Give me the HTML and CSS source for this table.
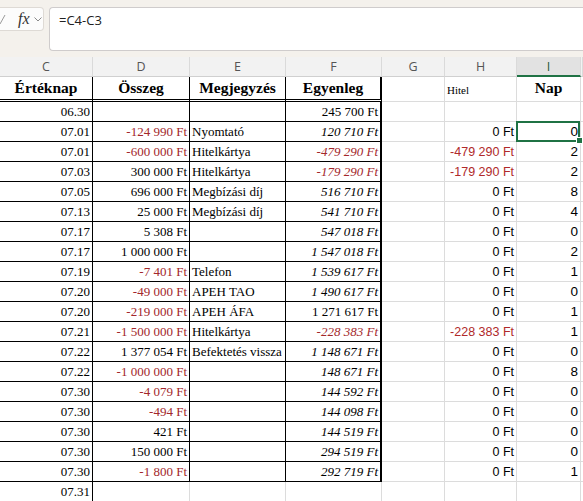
FILE: index.html
```html
<!DOCTYPE html>
<html>
<head>
<meta charset="utf-8">
<link rel="stylesheet" href="styles.css">
</head>
<body>
<div class="fbar">
  <div class="fxbox">
    <svg class="chk" width="8" height="12" viewBox="0 0 8 12"><path d="M0 11 L5 2" stroke="#9a9a9a" stroke-width="1" fill="none"/></svg>
    <span class="fx">fx</span>
    <svg class="chev" width="8" height="5" viewBox="0 0 8 5"><path d="M0.5 0.5 L4 4 L7.5 0.5" stroke="#8a8a8a" stroke-width="1" fill="none"/></svg>
  </div>
  <div class="formula">=C4-C3</div>
</div>

<div class="sheet">
  <div class="row letters">
    <div class="lc">C</div><div class="lc">D</div><div class="lc">E</div><div class="lc">F</div><div class="lc">G</div><div class="lc">H</div><div class="lc sel">I</div><div class="lc"></div>
  </div>
  <div class="row head">
    <div class="c t hd">Értéknap</div>
    <div class="c t hd">Összeg</div>
    <div class="c t hd">Megjegyzés</div>
    <div class="c t f hd">Egyenleg</div>
    <div class="c"></div>
    <div class="c hitel">Hitel</div>
    <div class="c hd">Nap</div>
    <div class="c"></div>
  </div>

  <div class="row"><div class="c t r">06.30</div><div class="c t r"></div><div class="c t"></div><div class="c t f r">245 700 Ft</div><div class="c"></div><div class="c h"></div><div class="c i"></div><div class="c"></div></div>
  <div class="row"><div class="c t r">07.01</div><div class="c t r n">-124 990 Ft</div><div class="c t">Nyomtató</div><div class="c t f r it">120 710 Ft</div><div class="c"></div><div class="c h">0 Ft</div><div class="c i active">0</div><div class="c"></div></div>
  <div class="row"><div class="c t r">07.01</div><div class="c t r n">-600 000 Ft</div><div class="c t">Hitelkártya</div><div class="c t f r it n">-479 290 Ft</div><div class="c"></div><div class="c h n">-479 290 Ft</div><div class="c i">2</div><div class="c"></div></div>
  <div class="row"><div class="c t r">07.03</div><div class="c t r">300 000 Ft</div><div class="c t">Hitelkártya</div><div class="c t f r it n">-179 290 Ft</div><div class="c"></div><div class="c h n">-179 290 Ft</div><div class="c i">2</div><div class="c"></div></div>
  <div class="row"><div class="c t r">07.05</div><div class="c t r">696 000 Ft</div><div class="c t">Megbízási díj</div><div class="c t f r it">516 710 Ft</div><div class="c"></div><div class="c h">0 Ft</div><div class="c i">8</div><div class="c"></div></div>
  <div class="row"><div class="c t r">07.13</div><div class="c t r">25 000 Ft</div><div class="c t">Megbízási díj</div><div class="c t f r it">541 710 Ft</div><div class="c"></div><div class="c h">0 Ft</div><div class="c i">4</div><div class="c"></div></div>
  <div class="row"><div class="c t r">07.17</div><div class="c t r">5 308 Ft</div><div class="c t"></div><div class="c t f r it">547 018 Ft</div><div class="c"></div><div class="c h">0 Ft</div><div class="c i">0</div><div class="c"></div></div>
  <div class="row"><div class="c t r">07.17</div><div class="c t r">1 000 000 Ft</div><div class="c t"></div><div class="c t f r it">1 547 018 Ft</div><div class="c"></div><div class="c h">0 Ft</div><div class="c i">2</div><div class="c"></div></div>
  <div class="row"><div class="c t r">07.19</div><div class="c t r n">-7 401 Ft</div><div class="c t">Telefon</div><div class="c t f r it">1 539 617 Ft</div><div class="c"></div><div class="c h">0 Ft</div><div class="c i">1</div><div class="c"></div></div>
  <div class="row"><div class="c t r">07.20</div><div class="c t r n">-49 000 Ft</div><div class="c t">APEH TAO</div><div class="c t f r it">1 490 617 Ft</div><div class="c"></div><div class="c h">0 Ft</div><div class="c i">0</div><div class="c"></div></div>
  <div class="row"><div class="c t r">07.20</div><div class="c t r n">-219 000 Ft</div><div class="c t">APEH ÁFA</div><div class="c t f r">1 271 617 Ft</div><div class="c"></div><div class="c h">0 Ft</div><div class="c i">1</div><div class="c"></div></div>
  <div class="row"><div class="c t r">07.21</div><div class="c t r n">-1 500 000 Ft</div><div class="c t">Hitelkártya</div><div class="c t f r it n">-228 383 Ft</div><div class="c"></div><div class="c h n">-228 383 Ft</div><div class="c i">1</div><div class="c"></div></div>
  <div class="row"><div class="c t r">07.22</div><div class="c t r">1 377 054 Ft</div><div class="c t">Befektetés vissza</div><div class="c t f r it">1 148 671 Ft</div><div class="c"></div><div class="c h">0 Ft</div><div class="c i">0</div><div class="c"></div></div>
  <div class="row"><div class="c t r">07.22</div><div class="c t r n">-1 000 000 Ft</div><div class="c t"></div><div class="c t f r it">148 671 Ft</div><div class="c"></div><div class="c h">0 Ft</div><div class="c i">8</div><div class="c"></div></div>
  <div class="row"><div class="c t r">07.30</div><div class="c t r n">-4 079 Ft</div><div class="c t"></div><div class="c t f r it">144 592 Ft</div><div class="c"></div><div class="c h">0 Ft</div><div class="c i">0</div><div class="c"></div></div>
  <div class="row"><div class="c t r">07.30</div><div class="c t r n">-494 Ft</div><div class="c t"></div><div class="c t f r it">144 098 Ft</div><div class="c"></div><div class="c h">0 Ft</div><div class="c i">0</div><div class="c"></div></div>
  <div class="row"><div class="c t r">07.30</div><div class="c t r">421 Ft</div><div class="c t"></div><div class="c t f r it">144 519 Ft</div><div class="c"></div><div class="c h">0 Ft</div><div class="c i">0</div><div class="c"></div></div>
  <div class="row"><div class="c t r">07.30</div><div class="c t r">150 000 Ft</div><div class="c t"></div><div class="c t f r it">294 519 Ft</div><div class="c"></div><div class="c h">0 Ft</div><div class="c i">0</div><div class="c"></div></div>
  <div class="row"><div class="c t r">07.30</div><div class="c t r n">-1 800 Ft</div><div class="c t"></div><div class="c t f r it">292 719 Ft</div><div class="c"></div><div class="c h">0 Ft</div><div class="c i">1</div><div class="c"></div></div>
  <div class="row"><div class="c t r">07.31</div><div class="c"></div><div class="c"></div><div class="c"></div><div class="c"></div><div class="c h"></div><div class="c i"></div><div class="c"></div></div>
</div>
</body>
</html>
```

FILE: styles.css
```css
html, body {
  margin: 0;
  padding: 0;
  background: #fff;
}
body {
  width: 583px;
  height: 501px;
  overflow: hidden;
}

/* formula bar */
.fbar {
  display: flex;
  align-items: flex-start;
  height: 57px;
  box-sizing: border-box;
  padding: 7px 0 6px 0;
  background: #f4f1ec;
}
.fxbox {
  width: 44px;
  height: 24px;
  flex: none;
  box-sizing: border-box;
  background: #fcfcfc;
  border: 1px solid #dedad5;
  border-left: none;
  border-radius: 0 4px 4px 0;
  display: flex;
  align-items: center;
}
.fx {
  margin-left: 10px;
  font-family: "Liberation Serif", serif;
  font-style: italic;
  font-size: 16px;
  color: #333;
  line-height: 16px;
}
.chev {
  margin-left: 4px;
}
.formula {
  flex: 1;
  margin-left: 5px;
  height: 44px;
  box-sizing: border-box;
  background: #fff;
  border: 1px solid #cfcccc;
  border-right: none;
  border-radius: 4px 0 0 4px;
  padding: 3px 9px;
  font-family: "Open Sans", sans-serif;
  font-size: 13px;
  line-height: 18px;
  color: #222;
}

/* grid */
.sheet {
  width: 583px;
  overflow: hidden;
}
.row {
  display: grid;
  grid-template-columns: 93px 97px 96px 96px 63px 72px 64px 2px;
  font-family: "Liberation Serif", serif;
  font-size: 13px;
  color: #000;
}
.letters {
  height: 20px;
  background: #f2f2f2;
}
.lc {
  box-sizing: border-box;
  height: 20px;
  border-right: 1px solid #dadada;
  border-bottom: 1px solid #d0d0d0;
  text-align: center;
  font-family: "Open Sans", sans-serif;
  font-size: 12.5px;
  line-height: 19px;
  color: #555;
}
.lc.sel {
  background: #e2e2e2;
  border-bottom: 2px solid #1f7244;
  color: #1f5a36;
}

.c {
  box-sizing: border-box;
  height: 20px;
  border-right: 1px solid #dcdcdc;
  border-bottom: 1px solid #dcdcdc;
  padding: 0 2px;
  line-height: 20px;
  white-space: nowrap;
}
.c.t {
  border-right-color: #000;
  border-bottom-color: #000;
}
.c.f {
  border-right: 2px solid #000;
}
.r {
  text-align: right;
}
.it {
  font-style: italic;
}
.n {
  color: #a3272b;
}

.head .c {
  height: 25px;
  line-height: 22px;
}
.head .c.t {
  border-bottom: 3px double #000;
}
.hd {
  text-align: center;
  font-weight: bold;
  font-size: 15.5px;
}
.hitel {
  font-size: 11px;
  line-height: 25px;
  padding-top: 2px;
  color: #000;
}

.h, .i {
  font-family: "Liberation Sans", sans-serif;
  text-align: right;
  font-size: 12.5px;
}
.i {
  font-size: 13.5px;
}
.h.n {
  color: #b02a2a;
}

.active {
  position: relative;
}
.active::after {
  content: "";
  position: absolute;
  left: -1px;
  top: -1px;
  right: 0;
  bottom: -1px;
  border: 2px solid #1f7244;
}
.active::before {
  content: "";
  position: absolute;
  right: -3px;
  bottom: -3px;
  width: 5px;
  height: 5px;
  background: #1f7244;
  border: 1px solid #fff;
  z-index: 2;
}
```
